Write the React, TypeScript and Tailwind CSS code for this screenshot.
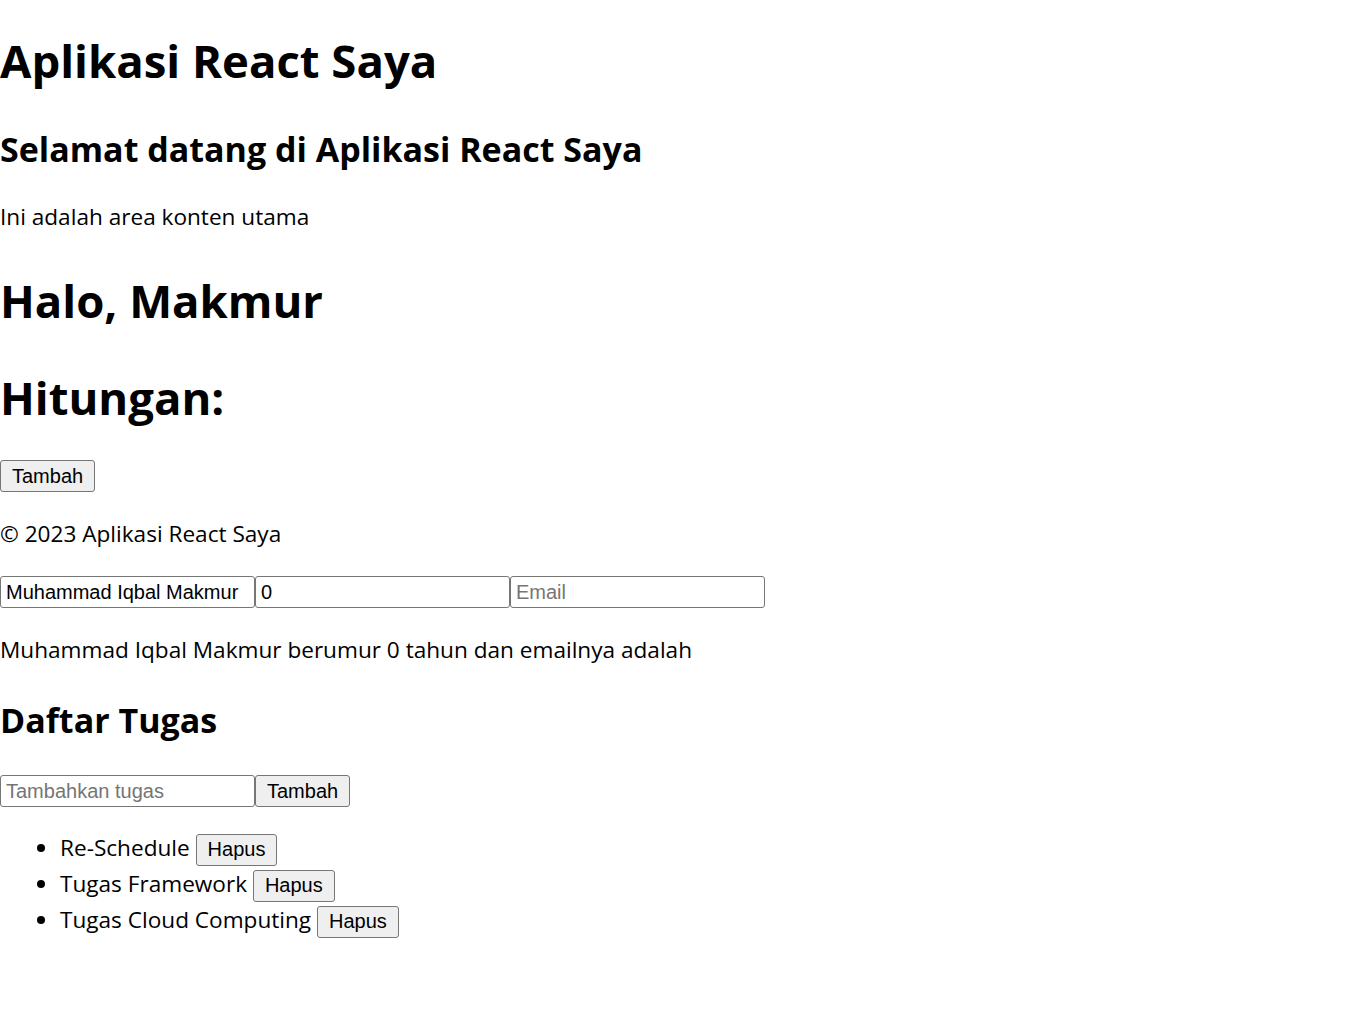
const inputClass =
  "w-[255px] h-[32px] border border-[#767676] rounded-[3px] px-[5px] bg-white text-black font-['Liberation_Sans',Arial,sans-serif] text-[20px] leading-[23px] placeholder:text-[#757575] outline-none";

const buttonClass =
  "inline-flex items-center justify-center h-[32px] px-[11px] border border-[#767676] rounded-[3px] bg-[#efefef] text-black font-['Liberation_Sans',Arial,sans-serif] text-[20px] leading-[23px]";

export default function App() {
  const tasks = ['Re-Schedule', 'Tugas Framework', 'Tugas Cloud Computing'];

  return (
    <div className="min-h-screen bg-white text-black font-['Open_Sans',sans-serif] text-[22.6px] leading-[32px]">
      <div className="flex flex-col items-start">
        <h1 className="mt-[28px] text-[45.5px] leading-[64px] font-bold">Aplikasi React Saya</h1>
        <h2 className="mt-[33px] text-[34px] leading-[48px] font-bold">
          Selamat datang di Aplikasi React Saya
        </h2>
        <p className="mt-[28px]">Ini adalah area konten utama</p>

        <h1 className="mt-[35px] text-[45.5px] leading-[64px] font-bold">Halo, Makmur</h1>
        <h1 className="mt-[33px] text-[45.5px] leading-[64px] font-bold">Hitungan:</h1>
        <div className="mt-[31px] flex">
          <button className={buttonClass}>Tambah</button>
        </div>

        <p className="mt-[26px]">© 2023 Aplikasi React Saya</p>

        <div className="mt-[26px] flex">
          <input className={inputClass} defaultValue="Muhammad Iqbal Makmur" />
          <input className={inputClass} defaultValue="0" />
          <input className={inputClass} placeholder="Email" />
        </div>
        <p className="mt-[26px]">Muhammad Iqbal Makmur berumur 0 tahun dan emailnya adalah</p>

        <h2 className="mt-[30px] text-[34px] leading-[48px] font-bold">Daftar Tugas</h2>
        <div className="mt-[31px] flex">
          <input className={inputClass} placeholder="Tambahkan tugas" />
          <button className={buttonClass}>Tambah</button>
        </div>
        <ul className="mt-[23px] list-disc pl-[60px]">
          {tasks.map((task) => (
            <li key={task} className="leading-[35.5px]">
              {task}{' '}
              <button className={`${buttonClass} h-[31px] align-middle`}>Hapus</button>
            </li>
          ))}
        </ul>
      </div>
    </div>
  );
}
